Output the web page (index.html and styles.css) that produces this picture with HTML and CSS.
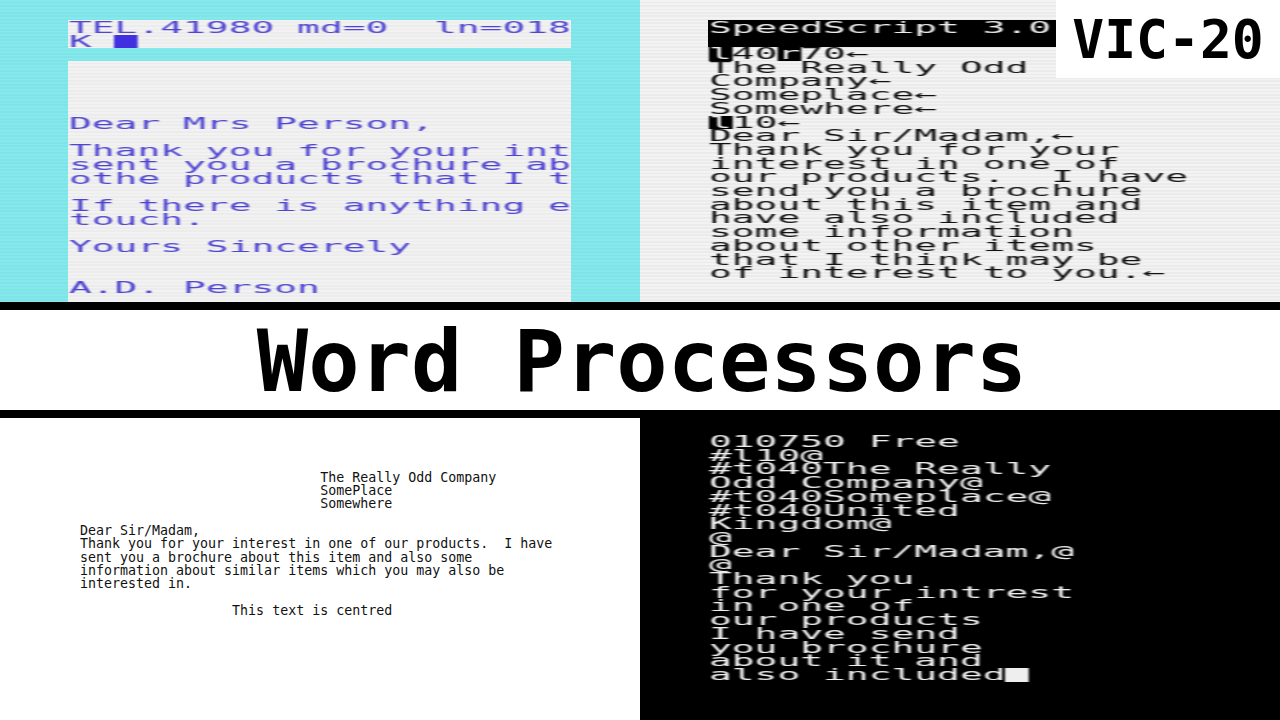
FILE: index.html
```html
<!DOCTYPE html>
<html>
<head>
    <meta charset="utf-8" />
    <title>Word Processors - VIC-20</title>
    <link rel="stylesheet" href="styles.css">
</head>
<body>
    <div class="thumb">
        <div class="shots">
            <div class="shot shot-blue">
                <div class="panel status-blue">
                    <pre class="term">TEL.41980 md=0  ln=018
K <span class="cursor cursor-blue"> </span></pre>
                </div>
                <div class="panel page-blue">
                    <pre class="term">




Dear Mrs Person,

Thank you for your int
sent you a brochure ab
othe products that I t

If there is anything e
touch.

Yours Sincerely


A.D. Person</pre>
                </div>
            </div>
            <div class="shot shot-grey">
                <div class="bar">
                    <pre class="term">SpeedScript 3.0</pre>
                </div>
                <pre class="term term-flush"><span class="cursor inv">l</span>40<span class="cursor inv">r</span>70←
The Really Odd
Company←
Someplace←
Somewhere←
<span class="cursor inv">l</span>10←
Dear Sir/Madam,←
Thank you for your
interest in one of
our products.  I have
send you a brochure
about this item and
have also included
some information
about other items
that I think may be
of interest to you.←</pre>
                <div class="badge">VIC-20</div>
            </div>
        </div>

        <h1 class="title">Word Processors</h1>

        <div class="shots">
            <div class="shot shot-print">
                <pre class="print">                              The Really Odd Company
                              SomePlace
                              Somewhere

Dear Sir/Madam,
Thank you for your interest in one of our products.  I have
sent you a brochure about this item and also some
information about similar items which you may also be
interested in.

                   This text is centred</pre>
            </div>
            <div class="shot shot-black">
                <pre class="term">010750 Free
#l10@
#t040The Really
Odd Company@
#t040Someplace@
#t040United
Kingdom@
@
Dear Sir/Madam,@
@
Thank you
for your intrest
in one of
our products
I have send
you brochure
about it and
also included<span class="cursor cursor-white"> </span></pre>
            </div>
        </div>
    </div>
</body>
</html>
```

FILE: styles.css
```css
html, body {
    margin: 0;
    width: 1280px;
    height: 720px;
    overflow: hidden;
    background-color: white;
}

.thumb {
    display: flex;
    flex-direction: column;
    height: 720px;
}

.shots {
    display: grid;
    grid-template-columns: 640px 640px;
    height: 302px;
}

.shot {
    position: relative;
    overflow: hidden;
    box-sizing: border-box;
}

/* old machines draw wide letters, so the text is stretched sideways */
.term {
    margin: 1px 0 0 1px;
    font: 16px/13.7px "DejaVu Sans Mono", monospace;
    white-space: pre;
    transform: scaleX(2.368);
    transform-origin: left top;
    filter: blur(0.35px);
}

.term-flush {
    margin-top: 0;
}

.cursor {
    display: inline-block;
    height: 13.7px;
    vertical-align: top;
}

.shot-blue {
    display: flex;
    flex-direction: column;
    padding: 20px 69px 0 68px;
    color: #4f45d2;
    background: repeating-linear-gradient(#85e9eb 0, #85e9eb 1.7px, #7fe4e7 1.7px, #7fe4e7 3.42px);
}

.panel {
    overflow: hidden;
    background: repeating-linear-gradient(#f2f2f2 0, #f2f2f2 1.7px, #ececec 1.7px, #ececec 3.42px);
}

.status-blue {
    height: 28px;
    flex: none;
    margin-bottom: 13px;
}

.page-blue {
    flex: 1;
}

.cursor-blue {
    background-color: #4030e0;
}

.shot-grey {
    padding: 20px 0 0 68px;
    color: #111;
    background: repeating-linear-gradient(#f3f3f3 0, #f3f3f3 1.7px, #ebebeb 1.7px, #ebebeb 3.42px);
}

.bar {
    display: flow-root;
    height: 27px;
    color: #eee;
    background-color: black;
}

.inv {
    color: #eee;
    background-color: black;
}

.badge {
    position: absolute;
    top: 0;
    right: 0;
    width: 224px;
    height: 78px;
    font: bold 53px/80px "DejaVu Sans Mono", monospace;
    text-align: center;
    color: black;
    background-color: white;
}

.title {
    margin: 0;
    height: 100px;
    padding-left: 4px;
    border-top: 8px solid black;
    border-bottom: 8px solid black;
    font: bold 85.3px/104px "DejaVu Sans Mono", monospace;
    text-align: center;
    color: black;
    background-color: white;
}

.shot-print {
    padding: 52.5px 0 0 80px;
    background-color: white;
}

.print {
    margin: 0;
    font: 13.3px/13.35px "DejaVu Sans Mono", monospace;
    color: #111;
    white-space: pre;
}

.shot-black {
    padding: 16px 0 0 68px;
    color: #eee;
    background-color: black;
}

.cursor-white {
    background-color: #eee;
}
```
